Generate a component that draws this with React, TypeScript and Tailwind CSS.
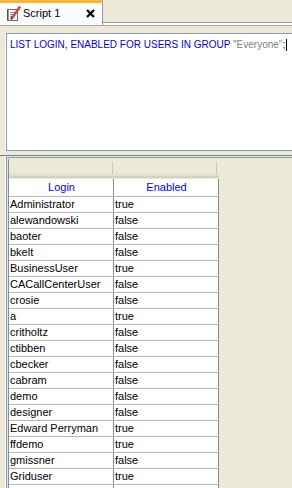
import type { ReactNode } from 'react'

const users: [string, string][] = [
  ['Administrator', 'true'],
  ['alewandowski', 'false'],
  ['baoter', 'false'],
  ['bkelt', 'false'],
  ['BusinessUser', 'true'],
  ['CACallCenterUser', 'false'],
  ['crosie', 'false'],
  ['a', 'true'],
  ['critholtz', 'false'],
  ['ctibben', 'false'],
  ['cbecker', 'false'],
  ['cabram', 'false'],
  ['demo', 'false'],
  ['designer', 'false'],
  ['Edward Perryman', 'true'],
  ['ffdemo', 'true'],
  ['gmissner', 'false'],
  ['Griduser', 'true'],
  ['guest', 'true'],
]

function ScriptIcon() {
  return (
    <svg width="16" height="16" viewBox="0 0 16 16" className="shrink-0">
      <rect x="2.5" y="3.5" width="10" height="11" fill="#fff" stroke="#6b6b6b" />
      <path d="M2 5h2M2 7h2M2 9h2M2 11h2M2 13h2" stroke="#333" strokeWidth="1" />
      <path d="M5 6.5h5M5 8.5h5M5 10.5h4M5 12.5h3" stroke="#7a8aa8" strokeWidth="1" />
      <path d="M7 12 L14.5 1.5" stroke="#c0301c" strokeWidth="2.4" strokeLinecap="round" />
      <path d="M7.6 11.2 L14.2 2" stroke="#f08040" strokeWidth="0.8" />
      <path d="M6 13.5 L7.2 11.6" stroke="#333" strokeWidth="1.2" />
    </svg>
  )
}

function CloseIcon() {
  return (
    <svg width="9" height="9" viewBox="0 0 9 9">
      <path d="M1 1L8 8M8 1L1 8" stroke="#000" strokeWidth="2.2" />
    </svg>
  )
}

function Cell({ children, head }: { children: ReactNode; head?: boolean }) {
  return (
    <div
      className={`w-[105px] border-r border-[#8c8c8c] pl-[1px] leading-[15px] whitespace-nowrap overflow-hidden ${
        head ? 'text-center text-[#0000ff] leading-[17px]' : 'text-black'
      }`}
    >
      {children}
    </div>
  )
}

export default function App() {
  return (
    <div
      className="w-[292px] h-[488px] overflow-hidden bg-[#ece9d8] flex flex-col"
      style={{ fontFamily: '"Liberation Sans", Arial, sans-serif' }}
    >
      {/* tab strip */}
      <div className="flex h-[25px] shrink-0">
        <div className="w-[103px] h-[25px] bg-[#fcfcfe] border-t-[3px] border-[#f7b53a] border-r border-r-[#919b9c] flex items-center pl-[5px] pb-[1px]">
          <ScriptIcon />
          <span className="ml-[2px] text-[11px] text-black">Script 1</span>
          <span className="ml-[26px] flex items-center">
            <CloseIcon />
          </span>
        </div>
        <div className="flex-1 flex flex-col">
          <div className="h-[22px] bg-[#ece9d8]" />
          <div className="h-[1px] bg-[#919b9c]" />
          <div className="h-[2px] bg-[#fcfcfe]" />
        </div>
      </div>
      <div className="h-[1px] bg-[#aca899] shrink-0" />
      <div className="h-[7px] shrink-0" />

      {/* editor */}
      <div className="ml-[5px] border-l-[1px] border-l-[#fcfcfe] shrink-0">
        <div className="h-[118px] bg-white border border-r-0 border-[#7f9db9] pl-[3px] pt-[5px] text-[10px] leading-[12px] text-[#0000e0] whitespace-nowrap">
          LIST LOGIN, ENABLED FOR USERS IN GROUP <span className="text-[#808080]">"Everyone"</span>;
          <span className="inline-block w-[1px] h-[12px] bg-black align-top ml-[1px]" />
        </div>
      </div>

      {/* splitter */}
      <div className="h-[4px] shrink-0" />
      <div className="h-[1px] bg-[#807e72] shrink-0" />
      <div className="h-[1px] shrink-0" />

      {/* results panel */}
      <div className="flex-1 ml-[5px] border-l border-l-[#fcfcfe]">
        <div className="h-full border-t border-l border-[#7f9db9] pl-[1px] pt-[1px]">
          <div className="border-l border-[#8c8c8c] w-[211px] text-[11px]">
            {/* column header */}
            <div className="flex h-[15px] bg-[#ece9d8] items-end">
              <div className="w-[103px] h-[15px]" />
              <div className="w-[1px] h-[12px] bg-[#fff] border-l border-[#c9c6b6]" />
              <div className="w-[103px] h-[15px]" />
              <div className="w-[1px] h-[12px] bg-[#fff] border-l border-[#c9c6b6]" />
            </div>
            <div className="h-[2px] bg-[#e2dfd1]" />
            <div className="h-[2px] bg-[#d6d2c2]" />
            <div className="h-[1px] bg-[#e8e6dc]" />

            <div className="flex bg-white border-b border-[#b5b5b5]">
              <Cell head>Login</Cell>
              <Cell head>Enabled</Cell>
            </div>
            {users.map(([login, enabled]) => (
              <div key={login} className="flex bg-white border-b border-[#b5b5b5]">
                <Cell>{login}</Cell>
                <Cell>{enabled}</Cell>
              </div>
            ))}
          </div>
        </div>
      </div>
    </div>
  )
}
